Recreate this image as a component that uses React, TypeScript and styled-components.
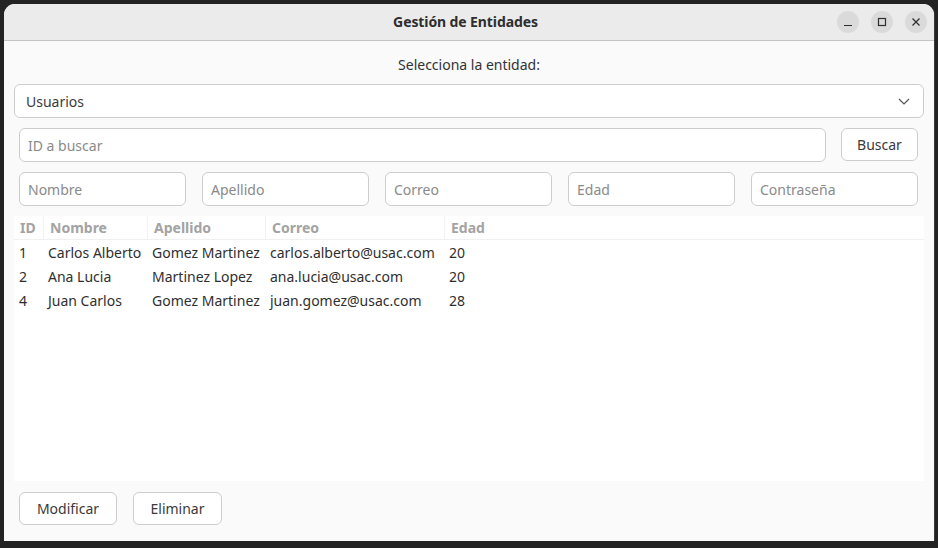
import React from "react";
import styled, { createGlobalStyle } from "styled-components";

const Global = createGlobalStyle`
  html, body { margin: 0; padding: 0; background: #242424; }
  body { font-family: "Noto Sans", "DejaVu Sans", sans-serif; }
  * { box-sizing: border-box; }
`;

const Desk = styled.div`
  width: 938px;
  height: 548px;
  padding: 4px 4px 7px 4px;
  background: #232323;
`;

const Window = styled.div`
  width: 930px;
  height: 537px;
  background: #fafafa;
  border-radius: 11px 11px 0 0;
  overflow: hidden;
  display: flex;
  flex-direction: column;
  box-shadow: 1px 0 0 #3a3a3a;
`;

const TitleBar = styled.div`
  height: 37px;
  flex: none;
  background: #ebebeb;
  border-bottom: 1px solid #c4c4c4;
  display: grid;
  grid-template-columns: 1fr auto 1fr;
  align-items: center;
  padding: 0 7px 0 0;
`;

const Title = styled.div`
  grid-column: 2;
  font-size: 14px;
  font-weight: 700;
  color: #2e2e2e;
  letter-spacing: -0.1px;
  padding-bottom: 2px;
`;

const Controls = styled.div`
  grid-column: 3;
  justify-self: end;
  display: flex;
  gap: 12px;
`;

const CtrlBtn = styled.div`
  width: 22px;
  height: 22px;
  border-radius: 50%;
  background: #dadada;
  display: flex;
  align-items: center;
  justify-content: center;
  color: #2e2e2e;
`;

const Content = styled.div`
  flex: 1;
  display: flex;
  flex-direction: column;
  padding: 0 10px 16px 10px;
`;

const Label = styled.div`
  text-align: center;
  font-size: 14px;
  line-height: 18px;
  color: #333;
  padding-top: 15px;
  margin-bottom: 10px;
`;

const Select = styled.div`
  height: 34px;
  border: 1px solid #cdcdcd;
  border-radius: 6px;
  background: #fff;
  display: flex;
  align-items: center;
  justify-content: space-between;
  padding: 0 13px 0 11px;
  font-size: 14px;
  color: #3a3a3a;
  margin-bottom: 10px;
`;

const Row = styled.div<{ $cols: string; $gap?: number }>`
  display: grid;
  grid-template-columns: ${(p) => p.$cols};
  column-gap: ${(p) => p.$gap ?? 16}px;
  padding: 0 6px 0 5px;
  margin-bottom: 10px;
`;

const Input = styled.div`
  height: 34px;
  border: 1px solid #cdcdcd;
  border-radius: 6px;
  background: #fff;
  display: flex;
  align-items: center;
  padding: 0 8px;
  font-size: 14px;
  color: #8a8a8a;
`;

const Button = styled.div<{ $w?: number }>`
  height: 33px;
  width: ${(p) => (p.$w ? `${p.$w}px` : "auto")};
  border: 1px solid #cdcdcd;
  border-radius: 6px;
  background: #fff;
  display: flex;
  align-items: center;
  justify-content: center;
  font-size: 14px;
  color: #3a3a3a;
`;

const Table = styled.div`
  flex: 1;
  background: #fff;
  display: flex;
  flex-direction: column;
  margin-bottom: 11px;
  font-size: 14px;
`;

const COLS = "29px 104px 118px 179px 1fr";

const HeadRow = styled.div`
  display: grid;
  grid-template-columns: ${COLS};
  height: 24px;
  border-bottom: 1px solid #f0f0f0;
`;

const HeadCell = styled.div<{ $first?: boolean }>`
  display: flex;
  align-items: center;
  padding-left: 6px;
  font-weight: 700;
  color: #a3a3a3;
  border-left: ${(p) => (p.$first ? "none" : "1px solid #f2f2f2")};
`;

const BodyRow = styled.div`
  display: grid;
  grid-template-columns: ${COLS};
  height: 24px;
`;

const Cell = styled.div`
  display: flex;
  align-items: center;
  padding-left: 5px;
  color: #2f2f2f;
  white-space: nowrap;
`;

const Footer = styled.div`
  display: flex;
  gap: 16px;
  padding-left: 5px;
`;

const rows = [
  ["1", "Carlos Alberto", "Gomez Martinez", "carlos.alberto@usac.com", "20"],
  ["2", "Ana Lucia", "Martinez Lopez", "ana.lucia@usac.com", "20"],
  ["4", "Juan Carlos", "Gomez Martinez", "juan.gomez@usac.com", "28"],
];

export default function App() {
  return (
    <>
      <Global />
      <Desk>
        <Window>
          <TitleBar>
            <Title>Gestión de Entidades</Title>
            <Controls>
              <CtrlBtn>
                <svg width="10" height="10" viewBox="0 0 10 10">
                  <line x1="1" y1="8.5" x2="9" y2="8.5" stroke="currentColor" strokeWidth="1.2" />
                </svg>
              </CtrlBtn>
              <CtrlBtn>
                <svg width="10" height="10" viewBox="0 0 10 10">
                  <rect x="1.5" y="1.5" width="7" height="7" fill="none" stroke="currentColor" strokeWidth="1.2" />
                </svg>
              </CtrlBtn>
              <CtrlBtn>
                <svg width="10" height="10" viewBox="0 0 10 10">
                  <path d="M1.5 1.5 L8.5 8.5 M8.5 1.5 L1.5 8.5" stroke="currentColor" strokeWidth="1.2" />
                </svg>
              </CtrlBtn>
            </Controls>
          </TitleBar>
          <Content>
            <Label>Selecciona la entidad:</Label>
            <Select>
              <span>Usuarios</span>
              <svg width="12" height="7" viewBox="0 0 12 7">
                <path d="M1 1 L6 6 L11 1" fill="none" stroke="#555" strokeWidth="1.2" />
              </svg>
            </Select>
            <Row $cols="1fr 77px" $gap={15}>
              <Input>ID a buscar</Input>
              <Button>Buscar</Button>
            </Row>
            <Row $cols="repeat(5, 1fr)">
              <Input>Nombre</Input>
              <Input>Apellido</Input>
              <Input>Correo</Input>
              <Input>Edad</Input>
              <Input>Contraseña</Input>
            </Row>
            <Table>
              <HeadRow>
                <HeadCell $first>ID</HeadCell>
                <HeadCell>Nombre</HeadCell>
                <HeadCell>Apellido</HeadCell>
                <HeadCell>Correo</HeadCell>
                <HeadCell>Edad</HeadCell>
              </HeadRow>
              {rows.map((r) => (
                <BodyRow key={r[0]}>
                  {r.map((c, i) => (
                    <Cell key={i}>{c}</Cell>
                  ))}
                </BodyRow>
              ))}
            </Table>
            <Footer>
              <Button $w={98}>Modificar</Button>
              <Button $w={89}>Eliminar</Button>
            </Footer>
          </Content>
        </Window>
      </Desk>
    </>
  );
}
